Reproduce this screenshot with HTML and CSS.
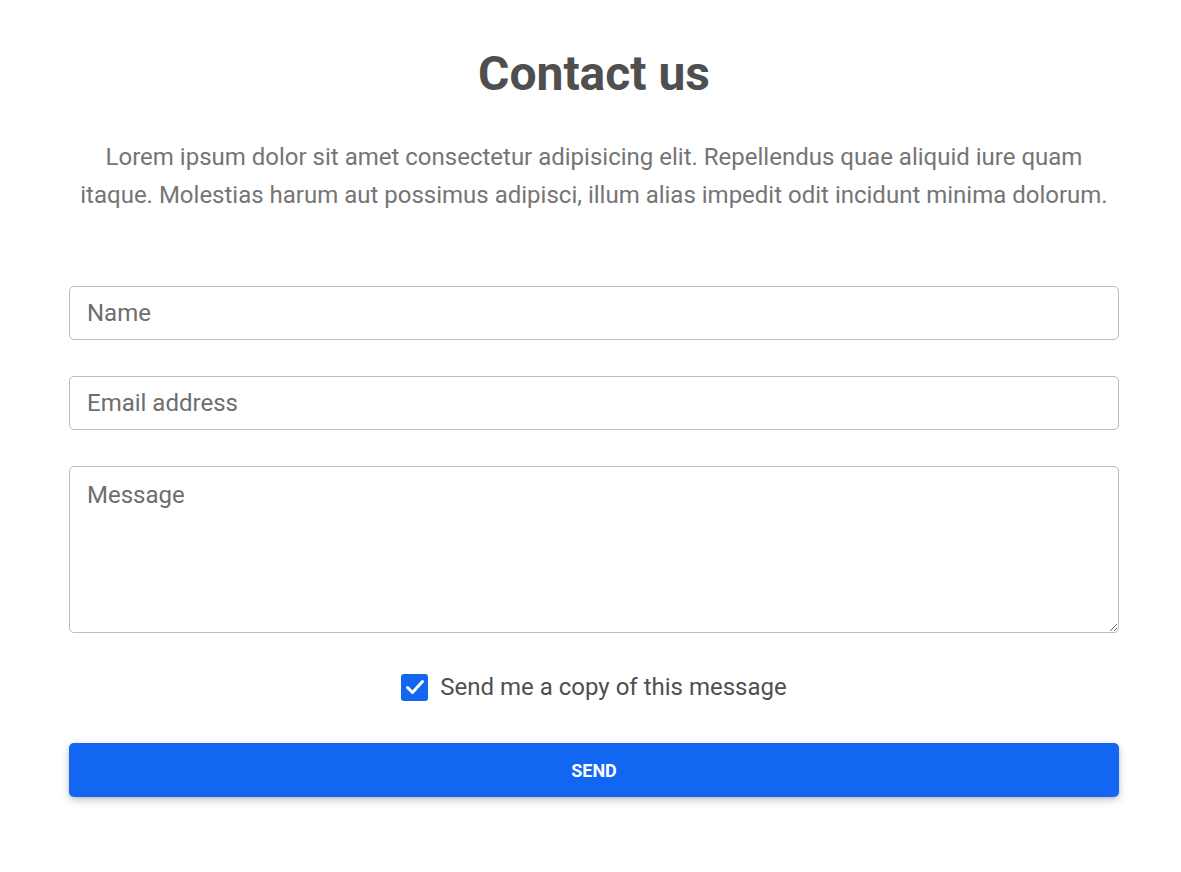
FILE: index.html
```html
<!DOCTYPE html>
<html lang="en">
<head>
<meta charset="utf-8">
<title>Contact us</title>
<link rel="stylesheet" href="styles.css">
</head>
<body>
<main class="wrap">
  <h1 class="title">Contact us</h1>
  <p class="lead">Lorem ipsum dolor sit amet consectetur adipisicing elit. Repellendus quae aliquid iure quam itaque. Molestias harum aut possimus adipisci, illum alias impedit odit incidunt minima dolorum.</p>
  <form class="form">
    <input class="field" type="text" placeholder="Name">
    <input class="field" type="email" placeholder="Email address">
    <textarea class="field area" placeholder="Message"></textarea>
    <label class="check">
      <span class="box"><svg viewBox="0 0 24 24" width="24" height="24"><path d="M4.5 12.5l5 5L19.5 6.5" fill="none" stroke="#fff" stroke-width="3" stroke-linecap="round" stroke-linejoin="round"/></svg></span>
      <span class="check-text">Send me a copy of this message</span>
    </label>
    <button class="send" type="button">SEND</button>
  </form>
</main>
</body>
</html>
```
FILE: styles.css
```css
html, body {
  margin: 0;
  padding: 0;
  background: #fff;
}
body {
  font-family: Roboto, "Liberation Sans", sans-serif;
}
.wrap {
  padding: 45px 62px 40px 69px;
}
.title {
  margin: 0;
  text-align: center;
  font-size: 48px;
  font-weight: 700;
  color: #4f4f4f;
  line-height: 58px;
}
.lead {
  margin: 35px 0 0;
  text-align: center;
  font-size: 24px;
  line-height: 38px;
  color: #757575;
}
.form {
  display: flex;
  flex-direction: column;
  gap: 36px;
  margin-top: 72px;
}
.field {
  box-sizing: border-box;
  width: 100%;
  height: 54px;
  border: 1px solid #bdbdbd;
  border-radius: 5px;
  padding: 0 17px;
  font-family: Roboto, "Liberation Sans", sans-serif;
  font-size: 24px;
  color: #4f4f4f;
  background: #fff;
  margin: 0;
  outline: none;
}
.field::placeholder {
  color: #6e6e6e;
}
.area {
  height: 167px;
  padding: 14px 17px;
  resize: vertical;
  display: block;
}
.check {
  display: flex;
  align-items: center;
  justify-content: center;
  gap: 12px;
  height: 28px;
  margin-top: 4px;
}
.box {
  width: 27px;
  height: 27px;
  border-radius: 3px;
  background: #1266f1;
  display: flex;
  align-items: center;
  justify-content: center;
}
.check-text {
  font-size: 24px;
  line-height: 28px;
  color: #4f4f4f;
}
.send {
  height: 54px;
  border: 0;
  border-radius: 5px;
  background: #1266f1;
  color: #fff;
  font-family: Roboto, "Liberation Sans", sans-serif;
  font-weight: 700;
  font-size: 18px;
  box-shadow: 0 3px 8px rgba(0,0,0,0.22), 0 1px 3px rgba(0,0,0,0.1);
  margin-top: 6px;
}
```
